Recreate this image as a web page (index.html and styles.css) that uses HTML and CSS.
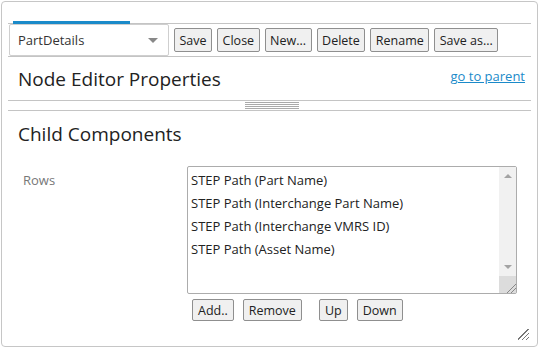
FILE: index.html
```html
<!DOCTYPE html>
<html lang="en">
  <head>
    <meta charset="utf-8">
    <title>Node Editor Properties</title>
    <link rel="stylesheet" href="styles.css">
  </head>
  <body>
    <div class="panel">
      <div class="tabs">
        <div class="tab"></div>
      </div>
      <div class="toolbar">
        <div class="picker">
          <span>PartDetails</span>
          <span class="caret"></span>
        </div>
        <button class="btn">Save</button>
        <button class="btn">Close</button>
        <button class="btn">New...</button>
        <button class="btn">Delete</button>
        <button class="btn">Rename</button>
        <button class="btn">Save as...</button>
      </div>
      <div class="titlebar">
        <h1>Node Editor Properties</h1>
        <a href="#" class="parent">go to parent</a>
      </div>
      <div class="splitter">
        <div class="grip"></div>
      </div>
      <div class="content">
        <h2>Child Components</h2>
        <div class="field">
          <div class="label">Rows</div>
          <div class="control">
            <div class="listbox">
              <ul class="items">
                <li>STEP Path (Part Name)</li>
                <li>STEP Path (Interchange Part Name)</li>
                <li>STEP Path (Interchange VMRS ID)</li>
                <li>STEP Path (Asset Name)</li>
              </ul>
              <div class="scrollbar">
                <span class="arrow up"></span>
                <span class="arrow down"></span>
                <span class="corner"></span>
              </div>
            </div>
            <div class="actions">
              <button class="btn small">Add..</button>
              <button class="btn small">Remove</button>
              <button class="btn small gap">Up</button>
              <button class="btn small">Down</button>
            </div>
          </div>
        </div>
      </div>
      <div class="resize"></div>
    </div>
  </body>
</html>
```
FILE: styles.css
```css
body{
  margin: 0;
  background-color: #fff;
  font-family: "Open Sans", "Noto Sans", sans-serif;
  color: #333;
}
.panel{
  position: relative;
  box-sizing: border-box;
  width: 537px;
  height: 346px;
  margin: 1px 0 0 1px;
  border: 1px solid #c6c6c6;
  border-radius: 4px;
}
.tabs{
  height: 21px;
  margin: 0 6px 0 6px;
  border-bottom: 1px solid #c4c4c4;
  display: flex;
  align-items: flex-end;
}
.tab{
  width: 117px;
  height: 3px;
  margin-left: 5px;
  margin-bottom: -1px;
  background-color: #1b8ac9;
}
.toolbar{
  display: flex;
  align-items: center;
  height: 32px;
  margin: 0 6px;
  border-bottom: 1px solid #c4c4c4;
}
.picker{
  box-sizing: border-box;
  width: 160px;
  height: 32px;
  margin-left: 1px;
  padding: 0 10px 0 8px;
  display: flex;
  align-items: center;
  justify-content: space-between;
  border: 1px solid #cfcfcf;
  border-radius: 2px;
  font-size: 13px;
  color: #333;
}
.caret{
  width: 0;
  height: 0;
  border-left: 5px solid transparent;
  border-right: 5px solid transparent;
  border-top: 5px solid #888;
}
.btn{
  box-sizing: border-box;
  height: 24px;
  margin-left: 5px;
  padding: 0 4.5px;
  font-family: "Open Sans", "Noto Sans", sans-serif;
  font-size: 12.5px;
  color: #222;
  background-color: #f0f0f0;
  border: 1px solid #8f8f8f;
  border-radius: 2px;
}
.titlebar{
  display: flex;
  justify-content: space-between;
  align-items: center;
  height: 43px;
  margin: 0 6px;
}
h1{
  margin: 0 0 0 10px;
  font-size: 19px;
  font-weight: normal;
  color: #222;
}
.parent{
  margin-right: 6px;
  margin-bottom: 5px;
  font-size: 13px;
  color: #1b8ac9;
}
.splitter{
  height: 9px;
  margin: 0 6px;
  border-top: 1px solid #c4c4c4;
  border-bottom: 1px solid #c4c4c4;
  display: flex;
  justify-content: center;
  align-items: center;
}
.grip{
  width: 54px;
  height: 7px;
  margin-left: 4px;
  background: repeating-linear-gradient(#aaa 0 1px, transparent 1px 2px);
}
.content{
  padding: 0 0 0 16px;
}
h2{
  margin: 10px 0 0 0;
  font-size: 19px;
  font-weight: normal;
  color: #222;
}
.field{
  display: flex;
  margin-top: 19px;
}
.label{
  width: 164px;
  padding: 5px 0 0 5px;
  font-size: 13px;
  color: #777;
}
.listbox{
  box-sizing: border-box;
  display: flex;
  width: 330px;
  height: 128px;
  border: 1px solid #acacac;
  border-radius: 2px;
}
.items{
  flex: 1;
  margin: 0;
  padding: 2px 0 0 3px;
  list-style: none;
  font-size: 13px;
  line-height: 23px;
  color: #222;
}
.scrollbar{
  position: relative;
  width: 17px;
  background-color: #f1f1f1;
}
.arrow{
  position: absolute;
  left: 5px;
  width: 0;
  height: 0;
  border-left: 4px solid transparent;
  border-right: 4px solid transparent;
}
.arrow.up{
  top: 7px;
  border-bottom: 4px solid #a3a3a3;
}
.arrow.down{
  bottom: 24px;
  border-top: 4px solid #a3a3a3;
}
.corner{
  position: absolute;
  right: 0;
  bottom: 0;
  width: 17px;
  height: 17px;
  background-color: #dcdcdc;
  background-image: linear-gradient(135deg, transparent 17px, #888 17px 18px, transparent 18px 20px, #888 20px 21px, transparent 21px);
}
.actions{
  display: flex;
  margin-top: 5px;
}
.btn.small{
  height: 22px;
  margin-left: 5px;
  margin-right: 4px;
  padding: 0 5px;
}
.btn.gap{
  margin-left: 13px;
}
.resize{
  position: absolute;
  right: 8px;
  bottom: 6px;
  width: 11px;
  height: 11px;
  background-image: linear-gradient(135deg, transparent 7px, #777 7px 8px, transparent 8px 10px, #777 10px 11px, transparent 11px 13px, #777 13px 14px, transparent 14px);
}
```
